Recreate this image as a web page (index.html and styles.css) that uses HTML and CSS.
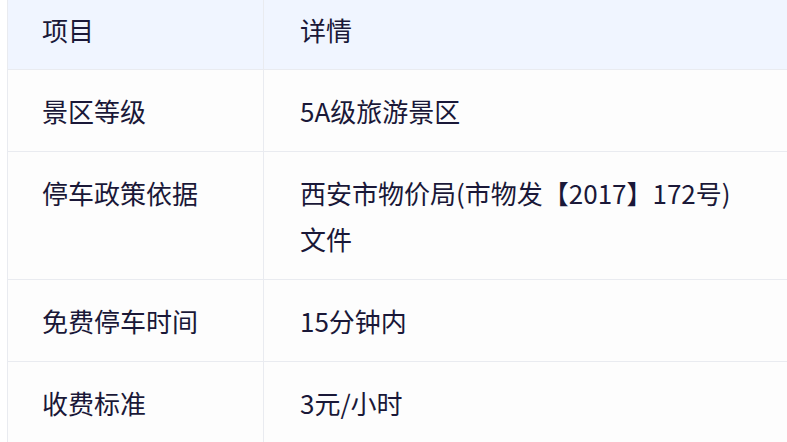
FILE: index.html
```html
<!DOCTYPE html>
<html lang="zh-CN">
<head>
<meta charset="utf-8">
<title>停车信息</title>
<link rel="stylesheet" href="styles.css">
</head>
<body>
<div class="page">
  <table class="info-table">
    <thead>
      <tr>
        <th class="col-item">项目</th>
        <th class="col-detail">详情</th>
      </tr>
    </thead>
    <tbody>
      <tr>
        <td class="col-item">景区等级</td>
        <td class="col-detail">5A级旅游景区</td>
      </tr>
      <tr>
        <td class="col-item">停车政策依据</td>
        <td class="col-detail">西安市物价局(市物发【2017】172号)<br>文件</td>
      </tr>
      <tr>
        <td class="col-item">免费停车时间</td>
        <td class="col-detail">15分钟内</td>
      </tr>
      <tr>
        <td class="col-item">收费标准</td>
        <td class="col-detail">3元/小时</td>
      </tr>
    </tbody>
  </table>
</div>
</body>
</html>
```
FILE: styles.css
```css
html, body {
  margin: 0;
  padding: 0;
  background: #ffffff;
  overflow: hidden;
}
.page {
  padding-left: 7px;
  width: 780px;
  overflow: hidden;
}
.info-table {
  border-collapse: collapse;
  width: 800px;
  font-family: "Microsoft YaHei", "Noto Sans CJK SC", "Noto Sans", sans-serif;
  font-size: 26px;
  line-height: 46px;
  color: #1a1838;
  table-layout: fixed;
}
.info-table th,
.info-table td {
  text-align: left;
  font-weight: normal;
  padding: 18px 36px 17px 34px;
  border: 1px solid #e9ebf0;
  vertical-align: top;
}
.info-table thead th {
  background: #f0f5ff;
  padding-top: 7px;
  padding-bottom: 16px;
  border-top: none;
}
.info-table tbody td {
  background: #fdfdfd;
}
.info-table .col-detail {
  padding-left: 36px;
}
.col-item {
  width: 185px;
}
```
